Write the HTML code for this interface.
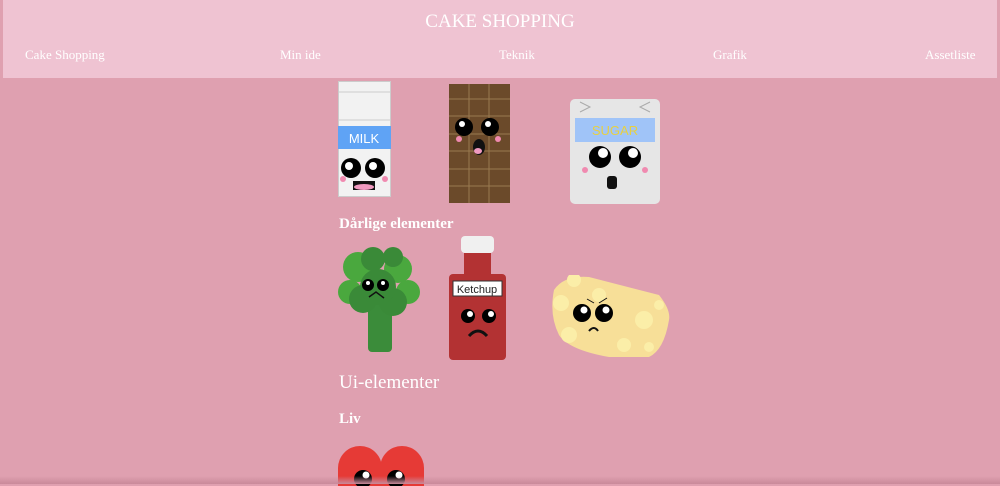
<!DOCTYPE html>
<html><head><style>
body{margin:0;width:1000px;height:484px;background:#dfa0b0;overflow:hidden;font-family:"Liberation Serif",serif;color:#fff;position:relative}
.hdr{position:absolute;left:3px;top:0;width:994px;height:78px;background:#efc3d2}
.t{position:absolute;top:11px;left:0;width:100%;text-align:center;font-size:19px}
.n{position:absolute;top:47px;font-size:13px}
.h{position:absolute;left:339px}
svg{position:absolute}
.sh{position:absolute;left:0;bottom:0;width:1000px;height:8px;background:linear-gradient(#dfa0b000,#c98a9a)}
</style></head><body>
<div class="hdr">
<div class="t">CAKE SHOPPING</div>
<div class="n" style="left:22px">Cake Shopping</div>
<div class="n" style="left:277px">Min ide</div>
<div class="n" style="left:496px">Teknik</div>
<div class="n" style="left:710px">Grafik</div>
<div class="n" style="left:922px">Assetliste</div>
</div>
<!-- milk -->
<svg style="left:338px;top:81px" width="54" height="116">
<rect x="0.5" y="0.5" width="52" height="115" fill="#f2f2f2" stroke="#ccc"/>
<line x1="0" y1="11" x2="53" y2="11" stroke="#ccc"/><line x1="0" y1="39" x2="53" y2="39" stroke="#ccc"/>
<rect x="0" y="45" width="53" height="23" fill="#5fa3f5"/>
<text x="26" y="62" font-size="13" fill="#fff" text-anchor="middle" font-family="Liberation Sans">MILK</text>
<circle cx="13" cy="87" r="10"/><circle cx="37" cy="87" r="10"/>
<circle cx="11" cy="85" r="4" fill="#fff"/><circle cx="35" cy="85" r="4" fill="#fff"/>
<circle cx="5" cy="98" r="3" fill="#f08ab0"/><circle cx="47" cy="98" r="3" fill="#f08ab0"/>
<rect x="15" y="100" width="22" height="9" fill="#111"/><ellipse cx="26" cy="106" rx="10" ry="3" fill="#f09ac0"/>
</svg>
<!-- chocolate -->
<svg style="left:449px;top:84px" width="61" height="119">
<rect width="61" height="119" fill="#6b4a2a"/>
<g stroke="#9a7a50" stroke-width="1"><line x1="20" y1="0" x2="20" y2="119"/><line x1="40" y1="0" x2="40" y2="119"/>
<line x1="0" y1="15" x2="61" y2="15"/><line x1="0" y1="32" x2="61" y2="32"/><line x1="0" y1="50" x2="61" y2="50"/><line x1="0" y1="67" x2="61" y2="67"/><line x1="0" y1="85" x2="61" y2="85"/><line x1="0" y1="102" x2="61" y2="102"/></g>
<circle cx="15" cy="43" r="9"/><circle cx="41" cy="43" r="9"/>
<circle cx="13" cy="40" r="3" fill="#fff"/><circle cx="39" cy="40" r="3" fill="#fff"/>
<circle cx="10" cy="55" r="3" fill="#f08ab0"/><circle cx="49" cy="55" r="3" fill="#f08ab0"/>
<ellipse cx="30" cy="63" rx="6" ry="8" fill="#111"/><ellipse cx="29" cy="67" rx="4" ry="3" fill="#f09ac0"/>
</svg>
<!-- sugar -->
<svg style="left:570px;top:99px" width="90" height="105">
<rect width="90" height="105" rx="5" fill="#e6e6e6"/>
<path d="M10 3 L20 8 L10 13 M80 3 L70 8 L80 13" stroke="#aaa" fill="none"/>
<rect x="5" y="19" width="80" height="24" fill="#a0c4f8"/>
<text x="45" y="36" font-size="13" fill="#e8d040" text-anchor="middle" font-family="Liberation Sans">SUGAR</text>
<circle cx="30" cy="58" r="11"/><circle cx="60" cy="58" r="11"/>
<circle cx="33" cy="54" r="5" fill="#fff"/><circle cx="63" cy="54" r="5" fill="#fff"/>
<circle cx="15" cy="71" r="3" fill="#f08ab0"/><circle cx="75" cy="71" r="3" fill="#f08ab0"/>
<rect x="37" y="77" width="10" height="13" rx="3" fill="#111"/>
</svg>
<div class="h" style="top:216px;font-size:15px;font-weight:bold">Dårlige elementer</div>
<!-- broccoli -->
<svg style="left:338px;top:247px" width="82" height="106">
<rect x="30" y="50" width="24" height="55" rx="4" fill="#3b8c3a"/>
<g fill="#4aa83e"><circle cx="20" cy="20" r="15"/><circle cx="60" cy="22" r="14"/><circle cx="12" cy="45" r="12"/><circle cx="70" cy="45" r="12"/></g>
<g fill="#3a8a38"><circle cx="35" cy="12" r="12"/><circle cx="55" cy="10" r="10"/><circle cx="25" cy="52" r="14"/><circle cx="55" cy="55" r="14"/><circle cx="40" cy="40" r="18"/></g>
<circle cx="30" cy="38" r="6"/><circle cx="45" cy="38" r="6"/>
<circle cx="30" cy="36" r="2" fill="#fff"/><circle cx="45" cy="36" r="2" fill="#fff"/>
<path d="M31 50 L38 45 L46 51" stroke="#111" fill="none" stroke-width="1.5"/>
</svg>
<!-- ketchup -->
<svg style="left:449px;top:236px" width="57" height="125">
<rect x="12" y="0" width="33" height="17" rx="4" fill="#f0f0f0"/>
<rect x="15" y="17" width="27" height="30" fill="#b33233"/>
<rect x="0" y="38" width="57" height="86" rx="4" fill="#b33233"/>
<rect x="4" y="45" width="49" height="15" fill="#fff" stroke="#333"/>
<text x="28" y="57" font-size="11" fill="#222" text-anchor="middle" font-family="Liberation Sans">Ketchup</text>
<circle cx="19" cy="80" r="7"/><circle cx="40" cy="80" r="7"/>
<circle cx="21" cy="78" r="3" fill="#fff"/><circle cx="42" cy="78" r="3" fill="#fff"/>
<path d="M20 100 Q29 90 38 100" stroke="#111" stroke-width="3" fill="none"/>
</svg>
<!-- cheese -->
<svg style="left:549px;top:275px" width="122" height="85">
<path d="M5 15 Q15 0 40 2 L110 20 Q122 35 120 45 Q115 75 100 82 L60 82 Q20 75 10 60 Q0 40 5 15Z" fill="#f7df98"/>
<g fill="#fbeea8"><circle cx="25" cy="5" r="7"/><circle cx="12" cy="28" r="8"/><circle cx="50" cy="20" r="7"/><circle cx="95" cy="45" r="9"/><circle cx="75" cy="70" r="7"/><circle cx="100" cy="72" r="5"/><circle cx="20" cy="60" r="8"/><circle cx="110" cy="30" r="5"/></g>
<circle cx="33" cy="38" r="9"/><circle cx="55" cy="38" r="9"/>
<circle cx="35" cy="35" r="3.5" fill="#fff"/><circle cx="57" cy="35" r="3.5" fill="#fff"/>
<path d="M38 24 L45 28 M58 23 L50 28" stroke="#111"/>
<path d="M40 56 Q45 50 49 56" stroke="#111" stroke-width="2" fill="none"/>
</svg>
<div class="h" style="top:372px;font-size:19px">Ui-elementer</div>
<div class="h" style="top:411px;font-size:15px;font-weight:bold">Liv</div>
<svg style="left:338px;top:446px" width="86" height="40">
<circle cx="22" cy="22" r="22" fill="#e63a36"/><circle cx="64" cy="22" r="22" fill="#e63a36"/>
<rect x="0" y="22" width="86" height="18" fill="#e63a36"/>
<circle cx="25" cy="33" r="9"/><circle cx="58" cy="33" r="9"/>
<circle cx="28" cy="29" r="3.5" fill="#fff"/><circle cx="61" cy="29" r="3.5" fill="#fff"/>
</svg>
<div class="sh"></div>
</body></html>
